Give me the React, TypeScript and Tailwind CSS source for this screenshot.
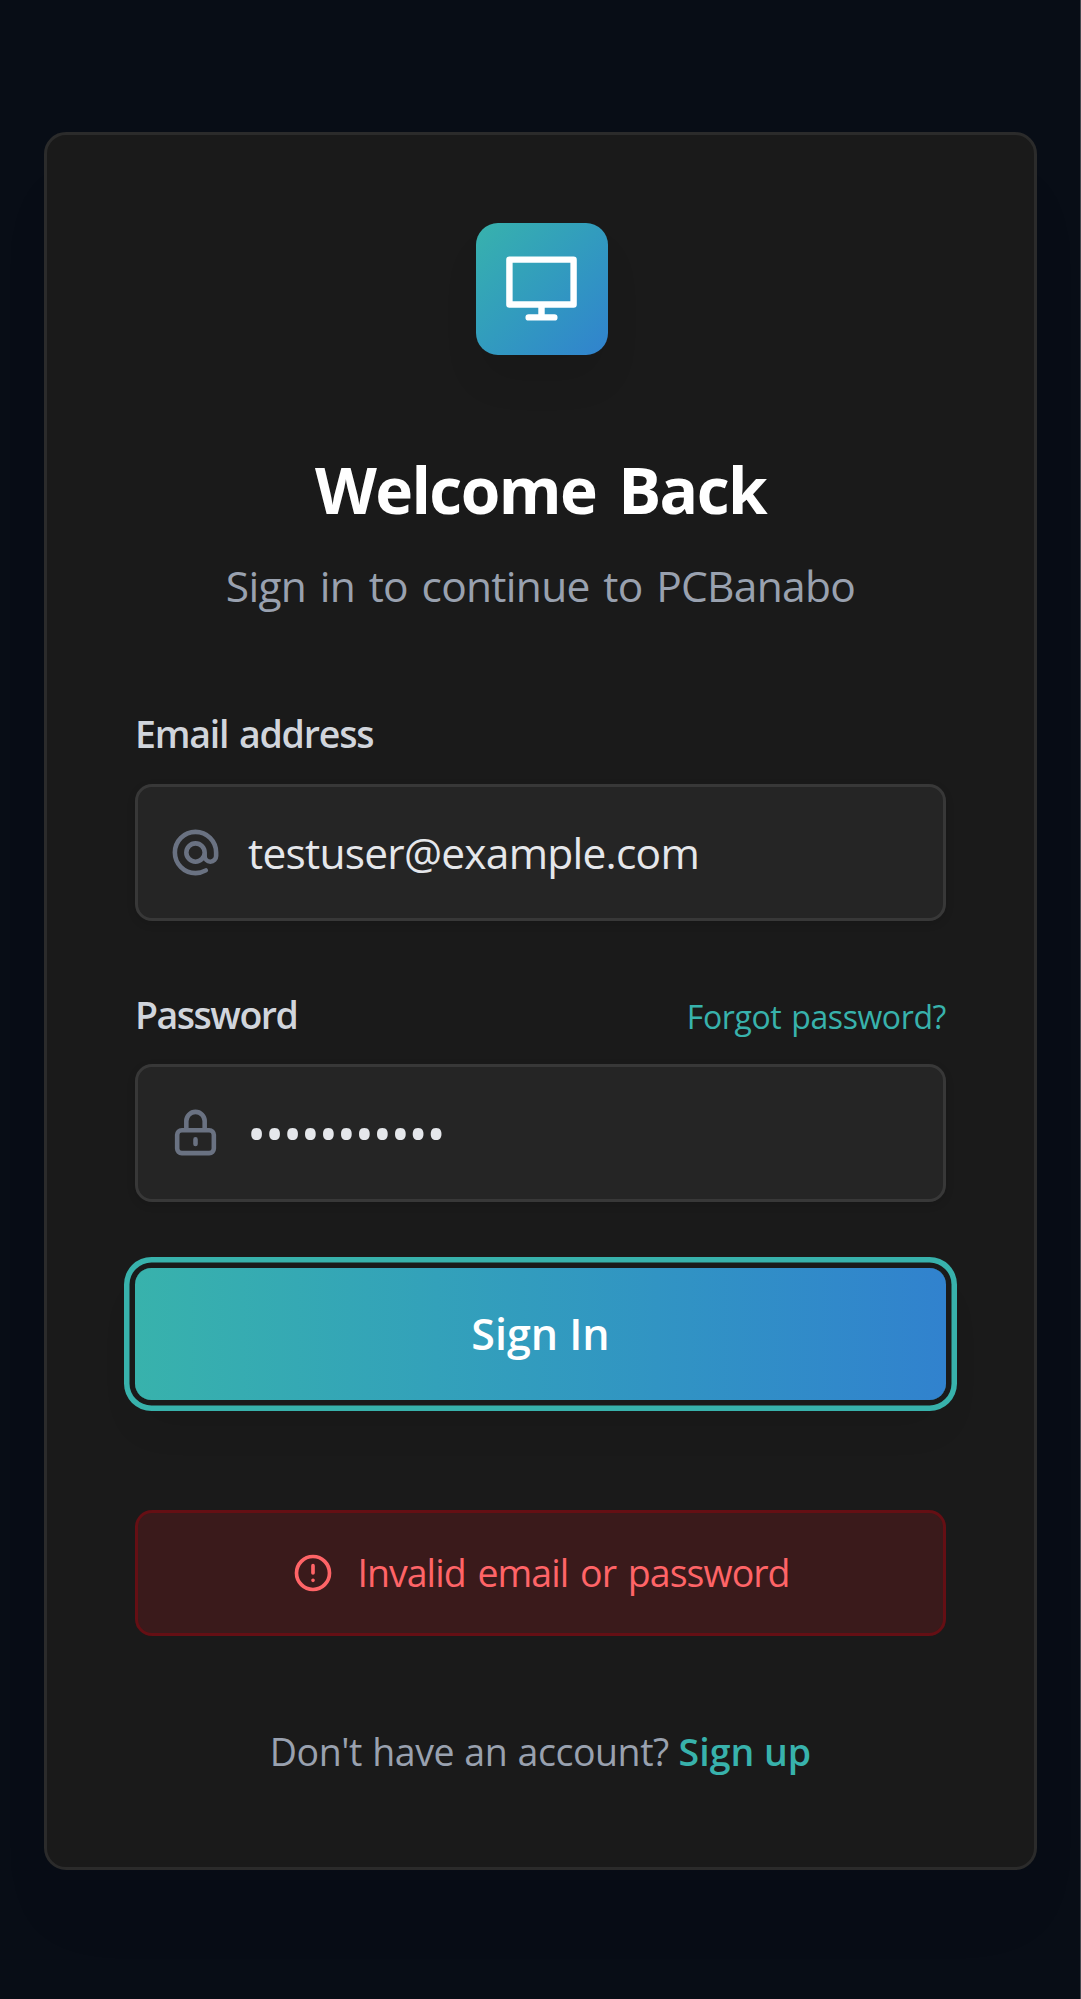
import type { ReactNode } from 'react';

function MonitorIcon() {
  return (
    <svg className="size-[77px]" viewBox="0 0 24 24" fill="none" stroke="currentColor" strokeWidth="2" strokeLinecap="round" strokeLinejoin="round">
      <path d="M2 3h20v14H2zM8 21h8M12 17v4" />
    </svg>
  );
}

function OutlineIcon({ d, className }: { d: string; className: string }) {
  return (
    <svg className={className} viewBox="0 0 24 24" fill="none" stroke="currentColor" strokeWidth="2" strokeLinecap="round" strokeLinejoin="round">
      <path d={d} />
    </svg>
  );
}

const AT_SIGN = 'M16 12a4 4 0 10-8 0 4 4 0 008 0zm0 0v1.5a2.5 2.5 0 005 0V12a9 9 0 10-9 9m4.5-1.206a8.959 8.959 0 01-4.5 1.207';
const LOCK = 'M12 15v2m-6 4h12a2 2 0 002-2v-6a2 2 0 00-2-2H6a2 2 0 00-2 2v6a2 2 0 002 2zm10-10V7a4 4 0 00-8 0v4h8z';
const ALERT = 'M12 8v4m0 4h.01M21 12a9 9 0 11-18 0 9 9 0 0118 0z';

function Field({ icon, children }: { icon: string; children: ReactNode }) {
  return (
    <div className="flex h-[137.5px] items-center gap-[25px] rounded-[17px] border-3 border-[#383838] bg-[#252525] pl-[30px] text-gray-200 shadow-[0_3px_8px_rgba(0,0,0,0.12)]">
      <OutlineIcon d={icon} className="size-[55px] shrink-0 text-[#6a7282]" />
      {children}
    </div>
  );
}

export default function App() {
  return (
    <div className="flex h-[1999px] w-full justify-center overflow-hidden border-r border-[#46494f] bg-[#080d16] pt-[132px] pl-px font-['Open_Sans','Noto_Sans',sans-serif] whitespace-nowrap">
      <main className="flex h-[1738px] w-[993px] flex-col rounded-[22px] border-3 border-[#2b2b2b] bg-[#1a1a1a] px-[88px] pt-[87.5px] shadow-[0_55px_69px_-14px_rgba(0,0,0,0.05)]">
        <header className="flex flex-col items-center">
          <div className="ml-0.5 flex size-[132px] items-center justify-center rounded-[22px] bg-linear-to-br from-[#38b2ac] to-[#3182ce] text-white shadow-[0_28px_41px_-8px_rgba(0,0,0,0.1)]">
            <MonitorIcon />
          </div>
          <h1 className="mt-[95.5px] text-[64px] leading-[80px] font-bold tracking-[-1.6px] text-white [word-spacing:7px]">Welcome Back</h1>
          <p className="mt-[22.5px] text-[42.5px] leading-[66px] tracking-[-0.7px] text-[#99a1af] [word-spacing:3.2px]">Sign in to continue to PCBanabo</p>
        </header>

        <form className="mt-[87px] flex flex-col">
          <label className="mb-[23px] text-[37.5px] leading-[55px] font-semibold tracking-[-1.2px] text-[#d1d5dc] [word-spacing:2px]">Email address</label>
          <Field icon={AT_SIGN}>
            <span className="pt-[2px] text-[42.5px] tracking-[-0.76px]">testuser@example.com</span>
          </Field>

          <div className="mt-[66px] mb-[22px] flex items-baseline justify-between leading-[55px]">
            <label className="text-[37.5px] font-semibold tracking-[-1.5px] text-[#d1d5dc]">Password</label>
            <a className="text-[32px] leading-[48px] tracking-[-0.4px] text-[#38b2ac] [word-spacing:2px]">Forgot password?</a>
          </div>
          <Field icon={LOCK}>
            <span className="-ml-px pt-[2px] text-[51px] leading-none tracking-[-1.22px]">•••••••••••</span>
          </Field>

          <button
            type="button"
            className="mt-[66px] h-[132px] rounded-[16.5px] bg-linear-to-r from-[#38b2ac] to-[#3182ce] pt-[2px] text-[43px] font-semibold text-white shadow-[0_0_0_5.5px_#1a1a1a,0_0_0_11px_#38b2ac,0_28px_41px_-8px_rgba(0,0,0,0.1)]"
          >
            Sign In
          </button>
        </form>

        <div className="mt-[110px] flex h-[126px] items-center justify-center gap-[22px] rounded-[17px] border-3 border-[#650f14] bg-[#3a1a1b] text-[#ff6467]">
          <OutlineIcon d={ALERT} className="size-[44px]" />
          <span className="pt-px text-[37.5px] tracking-[-0.95px] [word-spacing:3px]">Invalid email or password</span>
        </div>

        <p className="mt-[88px] text-center text-[37.5px] leading-[55px] text-[#99a1af]">
          <span className="tracking-[-0.45px] [word-spacing:1px]">Don't have an account?</span> <a className="font-semibold text-[#38b2ac]">Sign up</a>
        </p>
      </main>
    </div>
  );
}
